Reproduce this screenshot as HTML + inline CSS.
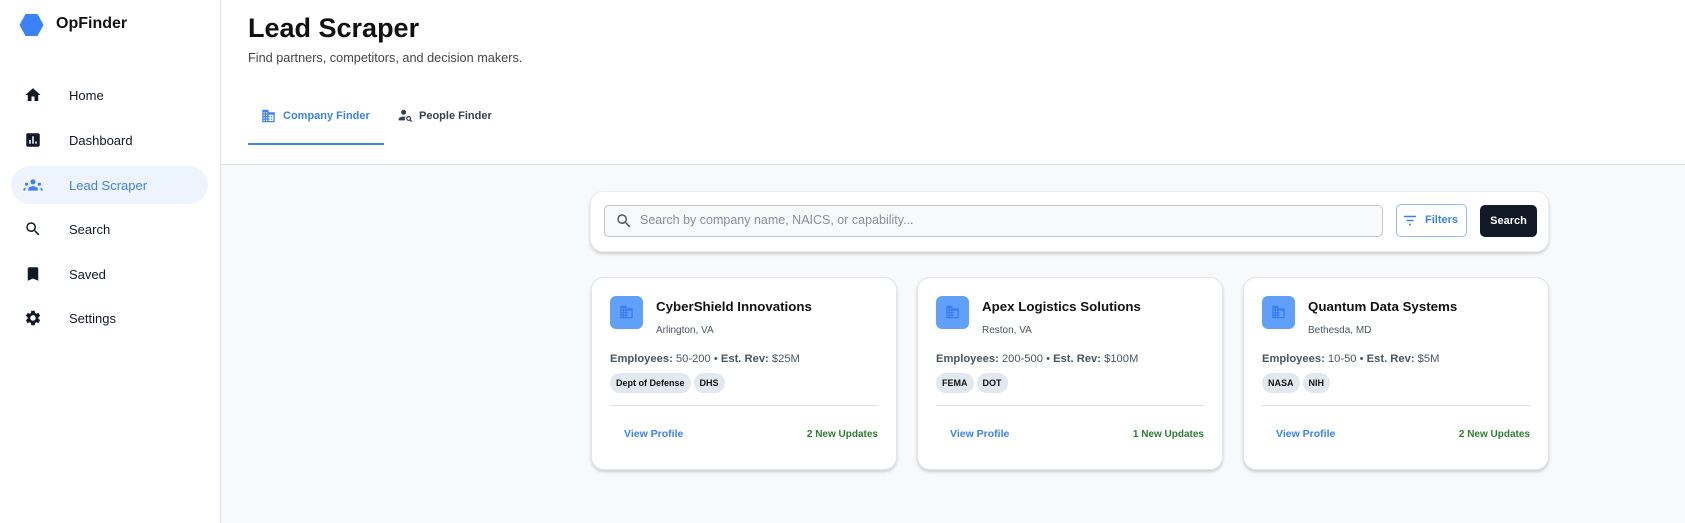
<!DOCTYPE html>
<html><head><meta charset="utf-8"><style>
*{box-sizing:border-box;margin:0;padding:0}
body{width:1685px;height:523px;overflow:hidden;font-family:"Liberation Sans",Arial,sans-serif;background:#f8f9fb;position:relative;color:#111827}
.abs{position:absolute}
#side{left:0;top:0;width:221px;height:523px;background:#fff;border-right:1px solid #e2e2e2}
.nav{position:absolute;left:11px;width:197px;height:38px;border-radius:19px;display:flex;align-items:center;font-size:13px;color:#111827}
.nav svg{position:absolute;left:13px;top:10px}
.nav span{position:absolute;left:58px}
.nav.act{background:#eef4fe;color:#3b82f6}
#head{left:221px;top:0;width:1464px;height:165px;background:#fff;border-bottom:1px solid #dedede}
.card{position:absolute;top:277px;width:306px;height:193px;background:#fff;border-radius:13px;border:1px solid #e3e5e8;box-shadow:0 2px 3px rgba(0,0,0,.18)}
.ib{position:absolute;left:18px;top:18px;width:33px;height:33px;border-radius:6px;background:#60a0f8}
.ib svg{position:absolute;left:9px;top:9px}
.nm{position:absolute;left:64px;top:21px;font-size:13.3px;font-weight:bold;color:#111}
.loc{position:absolute;left:64px;top:47px;font-size:10px;color:#4b5563}
.emp{position:absolute;left:18px;top:75px;font-size:11.2px;color:#4b5563}
.emp b{font-weight:bold}
.tags{position:absolute;left:18px;top:95px;display:flex;gap:3px}
.tag{height:20px;padding:0 6px;border-radius:10px;background:#e2e8f0;font-size:9px;font-weight:bold;line-height:20px;color:#111}
.div{position:absolute;left:18px;right:18px;top:127px;border-top:1px solid #e0e0e0}
.vp{position:absolute;left:32px;top:150px;font-size:10.5px;font-weight:bold;color:#3b82f6}
.nu{position:absolute;right:18px;top:151px;font-size:10px;font-weight:bold;color:#2e7d32}
</style></head><body>
<div id="side" class="abs">
  <svg class="abs" style="left:19px;top:13px" width="25" height="24" viewBox="0 0 25 24"><polygon points="6.5,1 18.5,1 24.5,12 18.5,23 6.5,23 0.5,12" fill="#3b82f6"/></svg>
  <div class="abs" style="left:56px;top:15px;font-size:16px;font-weight:bold;color:#111">OpFinder</div>
  <div class="nav" style="top:76px"><svg width="18" height="18" viewBox="0 0 24 24"><path d="M10 20v-6h4v6h5v-8h3L12 3 2 12h3v8z" fill="#111827"/></svg><span>Home</span></div>
  <div class="nav" style="top:121px"><svg width="18" height="18" viewBox="0 0 24 24"><path d="M19 3H5c-1.1 0-2 .9-2 2v14c0 1.1.9 2 2 2h14c1.1 0 2-.9 2-2V5c0-1.1-.9-2-2-2zM9 17H7v-5h2v5zm4 0h-2V7h2v10zm4 0h-2v-3h2v3z" fill="#111827"/></svg><span>Dashboard</span></div>
  <div class="nav act" style="top:166px"><svg width="20" height="16" viewBox="0 0 24 20" style="left:12px;top:11px"><circle cx="12" cy="6" r="3.2" fill="#3b82f6"/><circle cx="4" cy="9" r="2" fill="#3b82f6"/><circle cx="20" cy="9" r="2" fill="#3b82f6"/><path d="M6 17v-2c0-2 3-3.5 6-3.5s6 1.5 6 3.5v2z M0 17v-1.5c0-1 1.3-2 3.3-2.2-.6.6-.8 1.4-.8 2.2V17z M24 17v-1.5c0-1-1.3-2-3.3-2.2.6.6.8 1.4.8 2.2V17z" fill="#3b82f6"/></svg><span>Lead Scraper</span></div>
  <div class="nav" style="top:210px"><svg width="18" height="18" viewBox="0 0 24 24"><path d="M15.5 14h-.79l-.28-.27A6.47 6.47 0 0016 9.5 6.5 6.5 0 109.5 16c1.61 0 3.090-.59 4.230-1.57l.27.28v.79l5 4.99L20.49 19l-4.99-5zm-6 0C7.01 14 5 11.99 5 9.5S7.01 5 9.5 5 14 7.01 14 9.5 11.99 14 9.5 14z" fill="#111827"/></svg><span>Search</span></div>
  <div class="nav" style="top:255px"><svg width="18" height="18" viewBox="0 0 24 24"><path d="M17 3H7c-1.1 0-2 .9-2 2v16l7-3 7 3V5c0-1.1-.9-2-2-2z" fill="#111827"/></svg><span>Saved</span></div>
  <div class="nav" style="top:299px"><svg width="18" height="18" viewBox="0 0 24 24"><path d="M19.14 12.94c.04-.3.06-.61.06-.94 0-.32-.02-.64-.07-.94l2.03-1.58a.49.49 0 00.12-.61l-1.92-3.32a.49.49 0 00-.59-.22l-2.39.96c-.5-.38-1.030-.7-1.62-.94l-.36-2.54a.48.48 0 00-.48-.41h-3.84c-.24 0-.43.17-.47.41l-.36 2.54c-.59.24-1.13.57-1.62.94l-2.39-.96a.48.48 0 00-.59.22L2.74 8.870c-.12.21-.08.47.12.61l2.03 1.58c-.05.3-.09.63-.09.94s.02.64.07.94l-2.03 1.58a.49.49 0 00-.12.61l1.92 3.32c.12.22.37.29.59.22l2.39-.96c.5.38 1.030.7 1.62.94l.36 2.54c.05.24.24.41.48.41h3.84c.24 0 .44-.17.47-.41l.36-2.54c.59-.24 1.13-.56 1.62-.94l2.39.96c.22.08.47 0 .59-.22l1.92-3.32c.12-.22.07-.47-.12-.61l-2.010-1.58zM12 15.6c-1.98 0-3.6-1.62-3.6-3.6s1.62-3.6 3.6-3.6 3.6 1.62 3.6 3.6-1.62 3.6-3.6 3.6z" fill="#111827"/></svg><span>Settings</span></div>
</div>
<div id="head" class="abs">
  <div class="abs" style="left:27px;top:13px;font-size:27px;font-weight:bold;color:#111">Lead Scraper</div>
  <div class="abs" style="left:27px;top:51px;font-size:12.7px;color:#444">Find partners, competitors, and decision makers.</div>
  <svg class="abs" style="left:40px;top:109px" width="15" height="14" viewBox="0 0 24 22"><path d="M12 5V1H2v20h20V5H12zM6 19H4v-2h2v2zm0-4H4v-2h2v2zm0-4H4V9h2v2zm0-4H4V5h2v2zm4 12H8v-2h2v2zm0-4H8v-2h2v2zm0-4H8V9h2v2zm0-4H8V5h2v2zm10 12h-8v-2h2v-2h-2v-2h2v-2h-2V9h8v10zm-2-8h-2v2h2v-2zm0 4h-2v2h2v-2z" fill="#3b82f6"/></svg>
  <div class="abs" style="left:62px;top:110px;font-size:11px;font-weight:bold;color:#3b82f6">Company Finder</div>
  <svg class="abs" style="left:177px;top:109px" width="15" height="14" viewBox="0 0 24 22"><circle cx="9" cy="5" r="4" fill="#374151"/><path d="M1 18v-2c0-2.5 4-4 8-4 1 0 2 .1 3 .3-.6.9-1 2-1 3.2 0 1 .2 1.8.7 2.5z" fill="#374151"/><circle cx="17" cy="15" r="3" fill="none" stroke="#374151" stroke-width="2"/><path d="M19 17l3 3" stroke="#374151" stroke-width="2"/></svg>
  <div class="abs" style="left:198px;top:110px;font-size:11px;font-weight:bold;color:#374151">People Finder</div>
  <div class="abs" style="left:27px;top:143px;width:136px;height:2px;background:#3b82f6"></div>
</div>
<div class="abs" style="left:590px;top:191px;width:959px;height:61px;background:#fff;border-radius:13px;border:1px solid #eceef0;box-shadow:0 2px 3px rgba(0,0,0,.18)"></div>
<div class="abs" style="left:604px;top:205px;width:779px;height:32px;border:1px solid #c4c4c4;border-radius:5px;background:#f8f9fb"></div>
<svg class="abs" style="left:615px;top:212px" width="18" height="18" viewBox="0 0 24 24"><path d="M15.5 14h-.79l-.28-.27A6.47 6.47 0 0016 9.5 6.5 6.5 0 109.5 16c1.61 0 3.090-.59 4.230-1.57l.27.28v.79l5 4.99L20.49 19l-4.99-5zm-6 0C7.01 14 5 11.99 5 9.5S7.01 5 9.5 5 14 7.01 14 9.5 11.99 14 9.5 14z" fill="#555"/></svg>
<div class="abs" style="left:640px;top:213px;font-size:12.5px;color:#8a8f96">Search by company name, NAICS, or capability...</div>
<div class="abs" style="left:1396px;top:204px;width:71px;height:33px;border:1px solid #93bbf8;border-radius:5px;background:#fff"></div>
<svg class="abs" style="left:1403px;top:215px" width="14" height="11" viewBox="0 0 14 11"><path d="M1 1.5h12M3.5 5.5h7M6 9.5h2" stroke="#3b82f6" stroke-width="1.6"/></svg>
<div class="abs" style="left:1425px;top:214px;font-size:11px;font-weight:bold;color:#3b82f6">Filters</div>
<div class="abs" style="left:1480px;top:205px;width:57px;height:32px;border-radius:5px;background:#111827;color:#fff;font-size:11px;font-weight:bold;text-align:center;line-height:32px">Search</div>

<div class="card" style="left:591px">
  <div class="ib"><svg width="15" height="14" viewBox="0 0 24 22"><path d="M12 5V1H2v20h20V5H12zM6 19H4v-2h2v2zm0-4H4v-2h2v2zm0-4H4V9h2v2zm0-4H4V5h2v2zm4 12H8v-2h2v2zm0-4H8v-2h2v2zm0-4H8V9h2v2zm0-4H8V5h2v2zm10 12h-8v-2h2v-2h-2v-2h2v-2h-2V9h8v10z" fill="#3b7df0"/></svg></div>
  <div class="nm">CyberShield Innovations</div><div class="loc">Arlington, VA</div>
  <div class="emp"><b>Employees:</b> 50-200 • <b>Est. Rev:</b> $25M</div>
  <div class="tags"><div class="tag">Dept of Defense</div><div class="tag">DHS</div></div>
  <div class="div"></div><div class="vp">View Profile</div><div class="nu">2 New Updates</div>
</div>
<div class="card" style="left:917px">
  <div class="ib"><svg width="15" height="14" viewBox="0 0 24 22"><path d="M12 5V1H2v20h20V5H12zM6 19H4v-2h2v2zm0-4H4v-2h2v2zm0-4H4V9h2v2zm0-4H4V5h2v2zm4 12H8v-2h2v2zm0-4H8v-2h2v2zm0-4H8V9h2v2zm0-4H8V5h2v2zm10 12h-8v-2h2v-2h-2v-2h2v-2h-2V9h8v10z" fill="#3b7df0"/></svg></div>
  <div class="nm">Apex Logistics Solutions</div><div class="loc">Reston, VA</div>
  <div class="emp"><b>Employees:</b> 200-500 • <b>Est. Rev:</b> $100M</div>
  <div class="tags"><div class="tag">FEMA</div><div class="tag">DOT</div></div>
  <div class="div"></div><div class="vp">View Profile</div><div class="nu">1 New Updates</div>
</div>
<div class="card" style="left:1243px">
  <div class="ib"><svg width="15" height="14" viewBox="0 0 24 22"><path d="M12 5V1H2v20h20V5H12zM6 19H4v-2h2v2zm0-4H4v-2h2v2zm0-4H4V9h2v2zm0-4H4V5h2v2zm4 12H8v-2h2v2zm0-4H8v-2h2v2zm0-4H8V9h2v2zm0-4H8V5h2v2zm10 12h-8v-2h2v-2h-2v-2h2v-2h-2V9h8v10z" fill="#3b7df0"/></svg></div>
  <div class="nm">Quantum Data Systems</div><div class="loc">Bethesda, MD</div>
  <div class="emp"><b>Employees:</b> 10-50 • <b>Est. Rev:</b> $5M</div>
  <div class="tags"><div class="tag">NASA</div><div class="tag">NIH</div></div>
  <div class="div"></div><div class="vp">View Profile</div><div class="nu">2 New Updates</div>
</div>
</body></html>
